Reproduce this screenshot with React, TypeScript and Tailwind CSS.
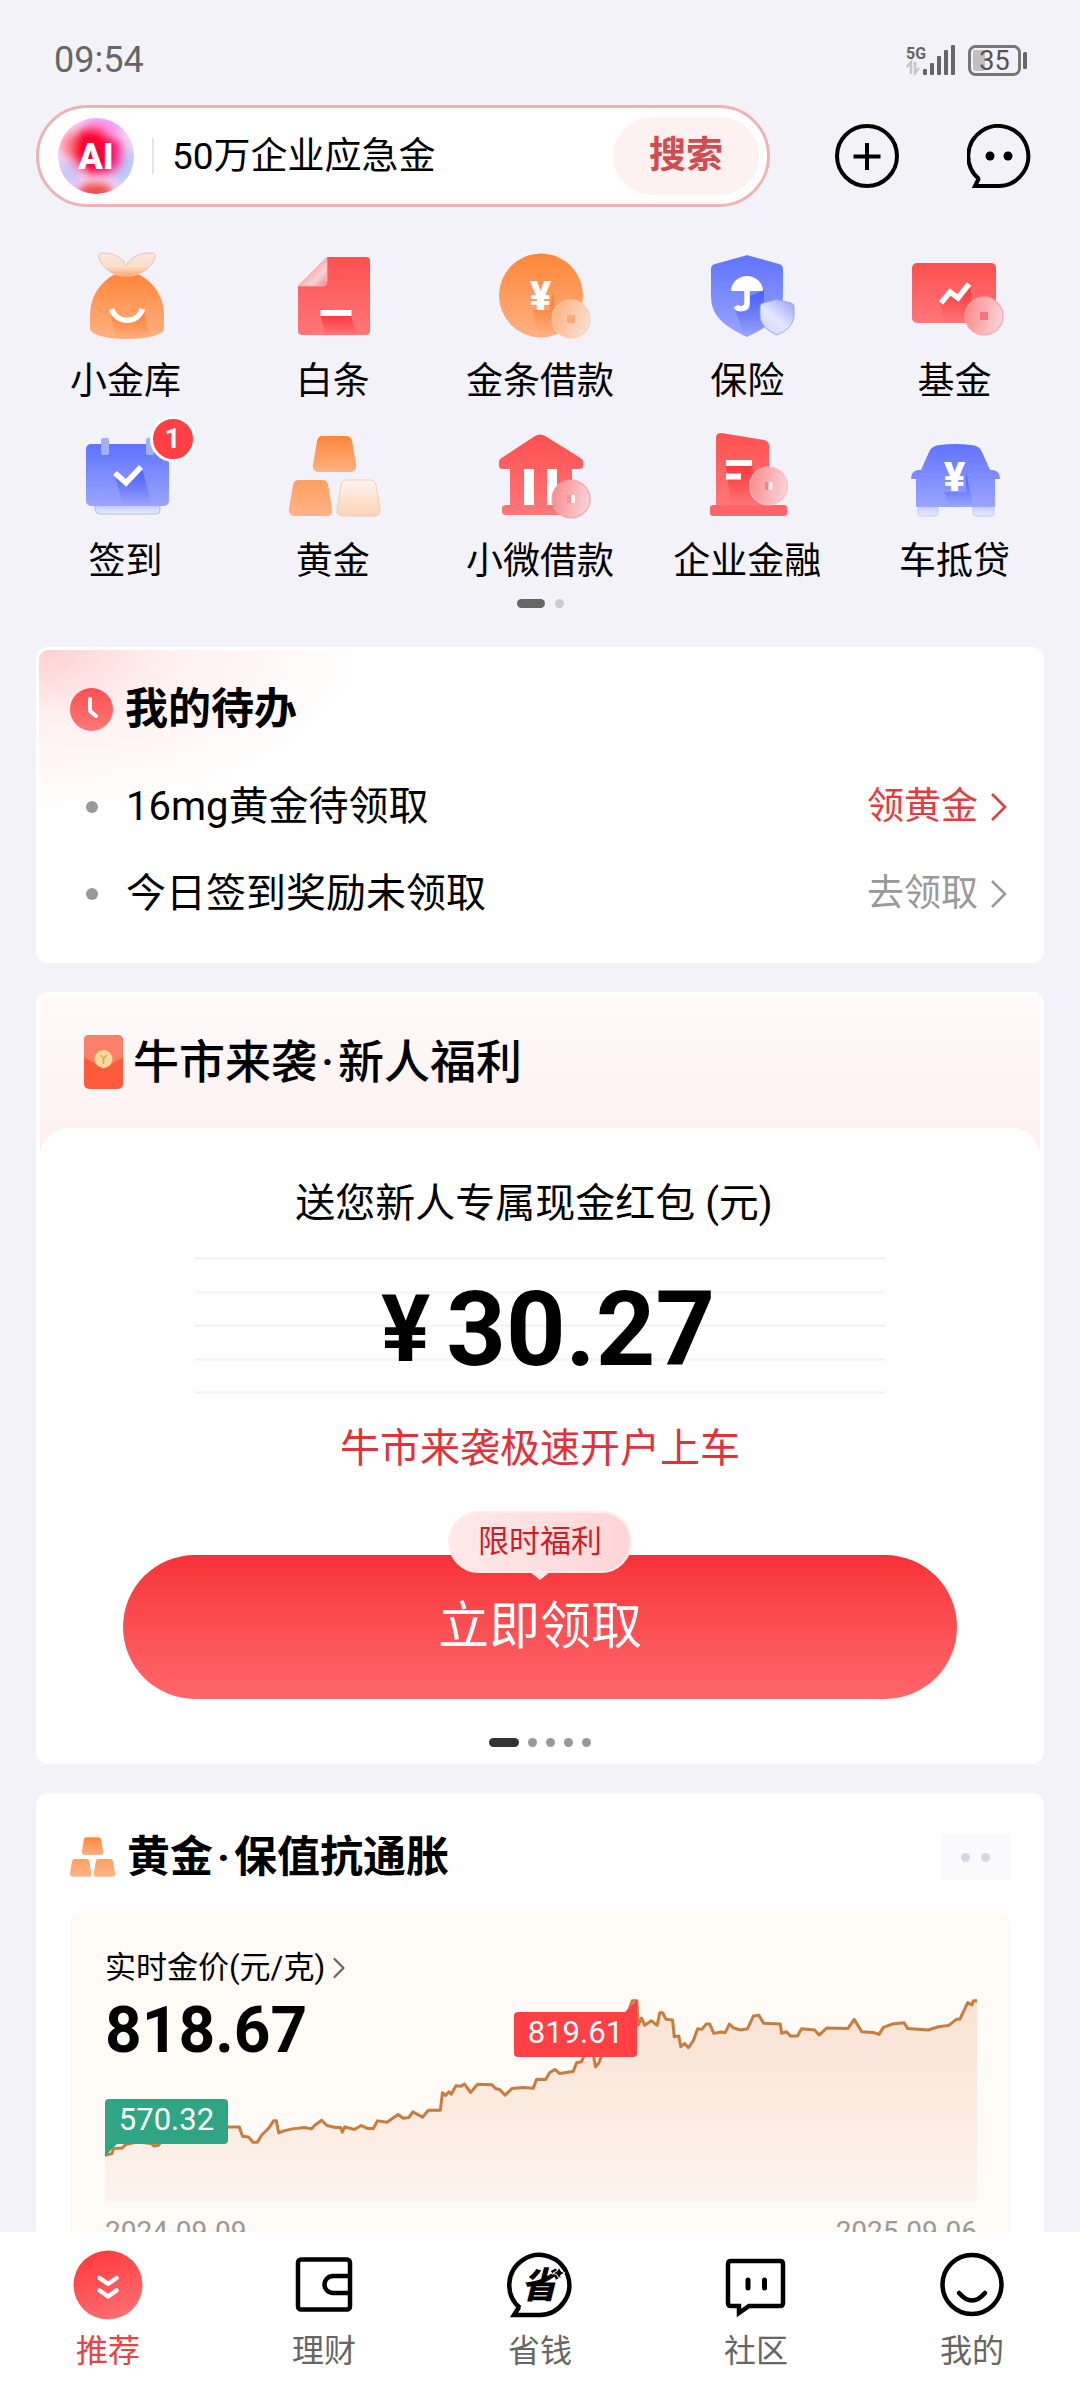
import React, { useState } from 'react';
import { ChevronRight } from 'lucide-react';

interface Service {
  name: string;
  icon: React.ReactNode;
  badge?: number;
}

interface Todo {
  text: string;
  action: string;
  highlight: boolean;
}

// Shared gradients, referenced by id from every icon below
const IconDefs: React.FC = () => (
  <svg width="0" height="0" className="absolute" aria-hidden="true">
    <defs>
      <linearGradient id="orange" x1="0" y1="0" x2="0" y2="1">
        <stop offset="0" stopColor="#ff8638" />
        <stop offset="1" stopColor="#ffb184" />
      </linearGradient>
      <linearGradient id="orangeSoft" x1="0" y1="0" x2="0" y2="1">
        <stop offset="0" stopColor="#ff9f60" />
        <stop offset="1" stopColor="#ffb388" />
      </linearGradient>
      <linearGradient id="red" x1="0" y1="0" x2="0" y2="1">
        <stop offset="0" stopColor="#ff5050" />
        <stop offset="1" stopColor="#ff777a" />
      </linearGradient>
      <linearGradient id="blue" x1="0" y1="0" x2="0" y2="1">
        <stop offset="0" stopColor="#5f74ff" />
        <stop offset="1" stopColor="#9ba4ff" />
      </linearGradient>
      <linearGradient id="tabRed" x1="0.3" y1="0" x2="0.7" y2="1">
        <stop offset="0" stopColor="#ff3a3d" />
        <stop offset="1" stopColor="#ff7073" />
      </linearGradient>
      <linearGradient id="shadeOrange" x1="0" y1="0" x2="0" y2="1">
        <stop offset="0" stopColor="#ff7320" stopOpacity="0.8" />
        <stop offset="1" stopColor="#ff7320" stopOpacity="0" />
      </linearGradient>
      <linearGradient id="shadeRed" x1="0" y1="0" x2="0" y2="1">
        <stop offset="0" stopColor="#f63034" stopOpacity="0.8" />
        <stop offset="1" stopColor="#f63034" stopOpacity="0" />
      </linearGradient>
      <linearGradient id="shadeBlue" x1="0" y1="0" x2="0" y2="1">
        <stop offset="0" stopColor="#3f55fb" stopOpacity="0.8" />
        <stop offset="1" stopColor="#3f55fb" stopOpacity="0" />
      </linearGradient>
      <linearGradient id="ear" x1="0" y1="0" x2="0" y2="1">
        <stop offset="0" stopColor="#f8e9e4" />
        <stop offset="0.6" stopColor="#fbdcc9" />
        <stop offset="1" stopColor="#ffa56c" />
      </linearGradient>
      <linearGradient id="fold" x1="0" y1="0" x2="1" y2="1">
        <stop offset="0.35" stopColor="#fb9da0" />
        <stop offset="0.7" stopColor="#f9d3d6" />
        <stop offset="1" stopColor="#fb8085" />
      </linearGradient>
      <linearGradient id="coinRed" x1="0" y1="0.4" x2="1" y2="0.6">
        <stop offset="0" stopColor="#fa8c8e" />
        <stop offset="1" stopColor="#f8d5da" />
      </linearGradient>
      <linearGradient id="coinOrange" x1="0" y1="0.3" x2="1" y2="0.7">
        <stop offset="0" stopColor="#ffb27e" />
        <stop offset="1" stopColor="#f7e0d6" />
      </linearGradient>
      <linearGradient id="miniShield" x1="0" y1="1" x2="0.8" y2="0">
        <stop offset="0" stopColor="#c9d0fb" />
        <stop offset="0.5" stopColor="#e4e8fc" />
        <stop offset="1" stopColor="#a2adfb" />
      </linearGradient>
      <linearGradient id="paleOrange" x1="0" y1="0" x2="0" y2="1">
        <stop offset="0" stopColor="#fdf3ee" />
        <stop offset="1" stopColor="#fdd3b8" />
      </linearGradient>
      <linearGradient id="paleBlue" x1="0" y1="0" x2="0" y2="1">
        <stop offset="0" stopColor="#b8c3fb" />
        <stop offset="1" stopColor="#e9edfc" />
      </linearGradient>
      <linearGradient id="area" x1="0" y1="0" x2="0" y2="1">
        <stop offset="0" stopColor="#f8e2d3" />
        <stop offset="1" stopColor="#fdf3ed" />
      </linearGradient>
    </defs>
  </svg>
);

const Icon: React.FC<{ children: React.ReactNode }> = ({ children }) => (
  <svg viewBox="0 0 96 90" className="w-24 h-[90px] overflow-visible" aria-hidden="true">{children}</svg>
);

const Coin: React.FC<{ cx: number; cy: number; fill: string; stroke: string; hole: string }> = ({ cx, cy, fill, stroke, hole }) => (
  <g>
    <circle cx={cx} cy={cy} r="19" fill={fill} stroke={stroke} strokeWidth="1.2" />
    <rect x={cx - 4} y={cy - 4} width="8" height="8" fill={hole} />
  </g>
);

const Yuan: React.FC<{ y: number }> = ({ y }) => (
  <text x="48.5" y={y} textAnchor="middle" fontSize="40" fontWeight="900" fill="#fff" fontFamily="Roboto, sans-serif">¥</text>
);

const goldBar = (x: number, y: number) =>
  `M${x + 9} ${y}h24q5 0 6 5l4 24q1 7-6 7h-31q-7 0-6-7l4-24q1-5 5-5z`;

const services: Service[] = [
  {
    name: '小金库',
    icon: (
      <Icon>
        <path d="M37 22h23c17 9 26 23 26 42v13c0 5-15 10-37 10S12 82 12 77V64c0-19 9-33 25-42z" fill="url(#orange)" />
        <path d="M32 58l6 28c10 2 26 1 34-2l-7-28c-6 16-25 20-33 2z" fill="url(#shadeOrange)" />
        <path d="M48 24C38 25 24 18 21 5c-1-3 1-4 4-4 10 0 20 4 23 13C52 5 62 1 73 1c3 0 5 1 4 4-3 13-19 20-29 19z" fill="url(#ear)" stroke="#eec0a8" strokeWidth="1" />
        <path d="M33.500 57c5 15 26 15 31 0" fill="none" stroke="#fff" strokeWidth="5.500" />
      </Icon>
    ),
  },
  {
    name: '白条',
    icon: (
      <Icon>
        <path d="M42 5h39q4 0 4 4v70q0 4-4 4H17q-4 0-4-4V34z" fill="url(#red)" />
        <path d="M36 64h30l6 19H40z" fill="url(#shadeRed)" />
        <path d="M42 5v24q0 5-5 5H13z" fill="url(#fold)" stroke="#f8b5b9" strokeWidth="0.800" />
        <rect x="35.500" y="58" width="31" height="6" fill="#fff" />
      </Icon>
    ),
  },
  {
    name: '金条借款',
    icon: (
      <Icon>
        <circle cx="49" cy="43.500" r="42" fill="url(#orange)" />
        <path d="M40 58h17l4-18 4 42H46z" fill="url(#shadeOrange)" />
        <Yuan y={58} />
        <Coin cx={79} cy={67} fill="url(#coinOrange)" stroke="#ffd0a8" hole="#fba877" />
      </Icon>
    ),
  },
  {
    name: '保险',
    icon: (
      <Icon>
        <path d="M45 4q3-1.500 6 0l29 8q4 1 4 5v27c0 22-16 31-36 41C28 75 12 66 12 44V17q0-4 4-5z" fill="url(#blue)" />
        <path d="M36 58l9 25q3 2 6 0l14-9V38L51 44v14z" fill="url(#shadeBlue)" />
        <path d="M32 39c0-8 7-15 16-15s16 7 16 15z" fill="#fff" />
        <path d="M48 38v13c0 7-9 7-11 3" fill="none" stroke="#fff" strokeWidth="5.500" />
        <path d="M77 47.500l15 3.500q3 1 3 4v8c0 10-8 16-17 20-9-4-17-10-17-20v-8q0-3 3-4z" fill="url(#miniShield)" stroke="#93a0ec" strokeWidth="0.900" />
      </Icon>
    ),
  },
  {
    name: '基金',
    icon: (
      <Icon>
        <rect x="6" y="11" width="84" height="60" rx="5" fill="url(#red)" />
        <path d="M34 50l10-8 8 6 12-14 4 36H38z" fill="url(#shadeRed)" />
        <path d="M35 51l9-11 8 6 11-14" fill="none" stroke="#fff" strokeWidth="5.500" />
        <Coin cx={78} cy={64} fill="url(#coinRed)" stroke="#f9a5a9" hole="#f4747a" />
      </Icon>
    ),
  },
  {
    name: '签到',
    badge: 1,
    icon: (
      <Icon>
        <path d="M17 72h65v6q0 4-4 4H22q-4 0-5-4z" fill="url(#paleBlue)" stroke="#a3b2f0" strokeWidth="0.800" />
        <rect x="8" y="12" width="83" height="62" rx="5" fill="url(#blue)" />
        <rect x="23" y="6" width="8" height="17" rx="2" fill="#a5b0fb" />
        <rect x="68" y="6" width="8" height="17" rx="2" fill="#a5b0fb" />
        <path d="M37 44l11 10 16-18 10 37H45z" fill="url(#shadeBlue)" />
        <path d="M37 41l11 10 15-16" fill="none" stroke="#fff" strokeWidth="5.500" />
      </Icon>
    ),
  },
  {
    name: '黄金',
    icon: (
      <Icon>
        <path d={goldBar(28, 4)} fill="url(#orange)" />
        <path d={goldBar(4, 48)} fill="url(#orangeSoft)" />
        <path d={goldBar(52, 48)} fill="url(#paleOrange)" stroke="#f5c4a5" strokeWidth="0.800" />
      </Icon>
    ),
  },
  {
    name: '小微借款',
    icon: (
      <Icon>
        <path
          fillRule="evenodd"
          d="M43 4q5-3 10 0l34 21q4 2 4 5v4q0 3-4 3h-7v36h3q3 0 3 3v4q0 3-3 3H14q-4 0-4-3v-4q0-3 4-3h4V37h-7q-4 0-4-3v-4q0-3 4-5zM32 37v36h10V37zM55 37v36h10V37z"
          fill="url(#red)"
        />
        <path d="M32 37h10v36H32zM55 37h10v36H55z" fill="#fff" />
        <Coin cx={79} cy={67} fill="url(#coinRed)" stroke="#f4a3a8" hole="#f6949a" />
        <rect x="79" y="63" width="4" height="8" fill="#fff" />
      </Icon>
    ),
  },
  {
    name: '企业金融',
    icon: (
      <Icon>
        <path d="M17 6q0-5 5-5l43 7q5 1 5 6v59H17z" fill="url(#red)" />
        <path d="M27 34h26l6 39H32z" fill="url(#shadeRed)" />
        <rect x="11" y="73" width="77" height="11" rx="3" fill="#ff6468" />
        <path d="M27 28h26v6H27zM27 41.500h15v6H27z" fill="#fff" />
        <Coin cx={69.5} cy={54} fill="url(#coinRed)" stroke="#fbbcbf" hole="#fdf0f1" />
        <rect x="65.500" y="50" width="4" height="8" fill="#f78186" />
      </Icon>
    ),
  },
  {
    name: '车抵贷',
    icon: (
      <Icon>
        <path d="M12 72h20v9q0 3-3 3H16q-4 0-4-3zM67 72h21v9q0 3-3 3H71q-4 0-4-3z" fill="url(#paleBlue)" stroke="#b4c0f2" strokeWidth="0.800" />
        <path d="M34 13q15-2 31 0 9 1 11 7l8 18h3q7 1 7 9h-5v28H10V47H5q0-8 7-9h3l8-18q2-6 11-7z" fill="url(#blue)" />
        <path d="M38 60h22V40l7 34H43z" fill="url(#shadeBlue)" />
        <Yuan y={59} />
      </Icon>
    ),
  },
];

const todos: Todo[] = [
  { text: '16mg黄金待领取', action: '领黄金', highlight: true },
  { text: '今日签到奖励未领取', action: '去领取', highlight: false },
];

// Gold price curve, one year
const pricePoints: number[][] = [
  [305, 1125], [325, 1120], [330, 1105], [355, 1103], [365, 1093], [400, 1085], [440, 1090], [447, 1097], [460, 1095], [475, 1080],
  [560, 1060], [640, 1030], [662, 1040], [695, 1040], [705, 1068], [722, 1070], [735, 1086], [748, 1086], [760, 1065], [780, 1045],
  [795, 1022], [803, 1022], [810, 1058], [825, 1052], [850, 1046], [885, 1042], [905, 1046], [915, 1035], [935, 1020], [950, 1036],
  [975, 1042], [990, 1042], [995, 1056], [1002, 1040], [1030, 1048], [1050, 1036], [1070, 1045], [1085, 1045], [1097, 1022], [1125, 1026],
  [1157, 1003], [1172, 1014], [1188, 1012], [1200, 995], [1228, 1011], [1245, 990], [1280, 990], [1286, 938], [1295, 946], [1305, 935],
  [1312, 942], [1325, 917], [1340, 918], [1350, 912], [1368, 937], [1388, 912], [1430, 914], [1440, 925], [1452, 928], [1468, 945],
  [1488, 925], [1520, 922], [1550, 924], [1560, 897], [1586, 898], [1598, 877], [1613, 868], [1626, 880], [1666, 874], [1676, 848],
  [1690, 845], [1703, 815], [1723, 815], [1731, 860], [1740, 850], [1753, 815], [1778, 760], [1818, 720], [1838, 662], [1851, 662],
  [1855, 735], [1865, 714], [1874, 736], [1893, 722], [1910, 736], [1918, 698], [1926, 698], [1936, 718], [1955, 720], [1960, 770],
  [1973, 768], [1979, 800], [1990, 790], [2001, 803], [2016, 780], [2028, 746], [2040, 748], [2053, 732], [2063, 732], [2075, 760],
  [2096, 756], [2108, 758], [2120, 732], [2133, 744], [2153, 750], [2173, 746], [2190, 708], [2206, 706], [2220, 730], [2268, 732],
  [2272, 760], [2286, 755], [2298, 768], [2318, 768], [2330, 746], [2368, 750], [2381, 765], [2403, 744], [2465, 745], [2483, 718],
  [2505, 755], [2538, 757], [2555, 763], [2568, 742], [2593, 732], [2628, 728], [2638, 745], [2698, 750], [2728, 740], [2758, 736],
  [2780, 718], [2790, 718], [2813, 668], [2825, 675], [2830, 662], [2840, 662],
];
const pricePath = 'M' + pricePoints.map(p => p.join(' ')).join('L');

const StatusBar: React.FC = () => (
  <div className="flex items-center justify-between h-14 pl-[54px] pr-[52px] text-[#666]">
    <span className="text-4xl leading-10">09:54</span>
    <svg width="122" height="34" viewBox="0 0 122 34" className="overflow-visible" fill="#666" fontFamily="Roboto, sans-serif" aria-hidden="true">
      <text x="0" y="16" fontSize="16" fontWeight="700">5G</text>
      <path d="M1 24l4-5v12M9 19v11l4-5" fill="none" stroke="#c6c6ca" strokeWidth="2.500" />
      <rect x="17" y="26" width="4" height="6" rx="1" />
      <rect x="24" y="20" width="4" height="12" rx="1" />
      <rect x="31" y="13" width="4" height="19" rx="1" />
      <rect x="38" y="7" width="4" height="25" rx="1" />
      <rect x="45" y="2" width="4" height="30" rx="1" />
      <rect x="63.500" y="3.500" width="50" height="28" rx="6" fill="none" stroke="#777" strokeWidth="3" />
      <rect x="67" y="7" width="12" height="21" rx="2" fill="#c0c0c4" />
      <rect x="117" y="9" width="4" height="17" rx="1.500" />
      <text x="88.500" y="27" textAnchor="middle" fontSize="27" fill="#555">35</text>
    </svg>
  </div>
);

const AiLogo: React.FC = () => (
  <svg viewBox="0 0 78 78" className="w-[78px] h-[78px] shrink-0" role="img" aria-label="AI">
    <defs>
      <clipPath id="aiClip"><circle cx="39" cy="39" r="38" /></clipPath>
      <filter id="aiBlur" x="-50%" y="-50%" width="200%" height="200%"><feGaussianBlur stdDeviation="5" /></filter>
    </defs>
    <g clipPath="url(#aiClip)">
      <rect width="78" height="78" fill="#f3d3f3" />
      <g filter="url(#aiBlur)">
        <ellipse cx="48" cy="8" rx="20" ry="10" fill="#f69cf2" />
        <ellipse cx="68" cy="50" rx="14" ry="18" fill="#b3cdff" />
        <ellipse cx="12" cy="56" rx="12" ry="12" fill="#cfc4f5" />
        <ellipse cx="14" cy="28" rx="10" ry="12" fill="#ff8a94" />
        <ellipse cx="51" cy="38" rx="16" ry="20" fill="#f4209a" />
        <ellipse cx="35" cy="33" rx="21" ry="24" fill="#ff0038" />
        <ellipse cx="38" cy="74" rx="18" ry="7" fill="#f2392f" />
      </g>
    </g>
    <text x="39" y="52" textAnchor="middle" fontSize="36" fontWeight="900" fill="#fff" fontFamily="Roboto, sans-serif">AI</text>
  </svg>
);

const SearchRow: React.FC = () => (
  <div className="flex items-center pl-9 pr-[49px] mt-[17px]">
    <form
      className="flex-1 min-w-0 flex items-center h-[102px] pl-[18px] pr-2 bg-white border-3 border-[#efb3b6] rounded-full"
      onSubmit={e => e.preventDefault()}
    >
      <AiLogo />
      <span className="w-0.5 h-9 ml-[17px] mr-[18px] bg-[#e4e4e8]" />
      <input
        type="search"
        aria-label="搜索"
        placeholder="50万企业应急金"
        className="flex-1 min-w-0 h-14 text-[37px] text-black placeholder:text-black outline-none"
      />
      <button type="submit" className="shrink-0 w-[146px] h-[78px] rounded-full bg-[#fdf1f2] text-[#d14c50] text-[37px] font-bold">搜索</button>
    </form>
    <button aria-label="添加" className="shrink-0 ml-[65px]">
      <svg width="64" height="64" viewBox="0 0 64 64" fill="none" stroke="#000" strokeWidth="4">
        <circle cx="32" cy="32" r="30" />
        <path d="M32 19v27M18.500 32.500h27" />
      </svg>
    </button>
    <button aria-label="消息" className="shrink-0 ml-[68px]">
      <svg width="64" height="64" viewBox="0 0 64 64" fill="none" stroke="#000" strokeWidth="4">
        <path d="M12 55A30 30 0 1 1 32 62H8l4-8" />
        <circle cx="23" cy="32" r="4.500" fill="#000" stroke="none" />
        <circle cx="41" cy="32" r="4.500" fill="#000" stroke="none" />
      </svg>
    </button>
  </div>
);

const ServiceGrid: React.FC = () => (
  <>
    <div className="grid grid-cols-5 gap-y-[30px] px-[22px] mt-[45px]">
      {services.map(s => (
        <a key={s.name} href="#" className="flex flex-col items-center">
          <span className="relative">
            {s.icon}
            {s.badge && (
              <span className="absolute -top-4 -right-[22px] w-[46px] h-[46px] flex items-center justify-center rounded-full bg-[#ff4045] border-3 border-white text-white text-[28px] leading-none font-bold">
                {s.badge}
              </span>
            )}
          </span>
          <span className="mt-5 text-[37px] leading-10 whitespace-nowrap text-black">{s.name}</span>
        </a>
      ))}
    </div>
    <div className="flex justify-center gap-[10px] mt-[17px]">
      <span className="w-7 h-[9px] rounded-full bg-[#666]" />
      <span className="w-[9px] h-[9px] rounded-full bg-[#ccccd0]" />
    </div>
  </>
);

const TodoCard: React.FC = () => (
  <section className="mx-9 mt-[39px] border-3 border-white rounded-xl bg-white bg-[radial-gradient(ellipse_330px_170px_at_top_left,#ffd0d1_0%,#fff0f0_40%,#ffffff_100%)] px-[31px] pt-[29px] pb-[23px]">
    <h2 className="flex items-center gap-3 text-[43px] leading-[60px] font-bold">
      <svg width="43" height="43" viewBox="0 0 43 43" aria-hidden="true">
        <circle cx="21.500" cy="21.500" r="21.500" fill="url(#red)" />
        <path d="M20 11v12l6 5" fill="none" stroke="#fff" strokeWidth="4" strokeLinecap="round" strokeLinejoin="round" />
      </svg>
      我的待办
    </h2>
    <ul className="mt-6">
      {todos.map(t => (
        <li key={t.text} className="flex items-center h-[87px]">
          <span className="w-3 h-3 mx-4 rounded-full bg-[#999] shrink-0" />
          <span className="flex-1 ml-3 text-[40px] leading-[56px]">{t.text}</span>
          <a href="#" className={`flex items-center text-[37px] leading-[56px] ${t.highlight ? 'text-[#e43b40]' : 'text-[#999]'}`}>
            {t.action}
            <svg width="32" height="32" viewBox="0 0 32 32" fill="none" stroke="currentColor" strokeWidth="2.500" aria-hidden="true">
              <path d="M14 3l13 13-13 13" />
            </svg>
          </a>
        </li>
      ))}
    </ul>
  </section>
);

const BonusCard: React.FC = () => (
  <section className="mx-9 mt-[29px] p-1 rounded-xl bg-white">
    <div className="bg-[linear-gradient(#fffafa,#feefef_160px)]">
      <h2 className="flex items-center h-[132px] pl-11 text-[46px] font-medium">
        <svg width="39" height="54" viewBox="0 0 39 54" className="mr-[10px]" aria-hidden="true">
          <rect width="39" height="54" rx="5" fill="#ff5a3c" />
          <path d="M0 22V5q0-5 5-5h29q5 0 5 5v17L19.500 34z" fill="#fb8069" />
          <circle cx="19.500" cy="24" r="9" fill="#f8da9c" />
          <path d="M17 20l2.500 4 3-4M19.500 24v5" stroke="#d9a95c" strokeWidth="1.500" fill="none" />
        </svg>
        牛市来袭<span className="mx-1">·</span>新人福利
      </h2>
      <div className="flex flex-col rounded-t-[28px] bg-white pt-12 pb-[13px] text-center">
        <p className="pr-3 text-[40px] leading-[56px]">送您新人专属现金红包 (元)</p>
        <div className="grid mx-[155px] mt-[25px]">
          <div className="[grid-area:1/1] flex flex-col justify-between h-[137px]">
            {[0, 1, 2, 3, 4].map(i => <span key={i} className="h-[3px] bg-[#f5f5f5]" />)}
          </div>
          <p className="[grid-area:1/1] flex items-center justify-center gap-4 pl-4 text-[104px] leading-[146px] font-bold">
            <span className="text-[92px]">¥</span>30.27
          </p>
        </div>
        <p className="mt-[18px] text-[40px] leading-[56px] text-[#e1323a]">牛市来袭极速开户上车</p>
        <div className="relative mx-[83px] mt-[78px]">
          <button className="w-full h-36 rounded-full bg-linear-to-b from-[#f73137] to-[#ff666b] text-white text-[51px]">立即领取</button>
          <span className="absolute left-1/2 -translate-x-1/2 -top-11 h-[62px] px-7 flex items-center rounded-full border-2 border-[#ffeceb] bg-linear-to-r from-[#ffe9e8] to-[#ffd5d7] text-[31px] text-[#cb1f2b] whitespace-nowrap">
            限时福利
            <span className="absolute left-1/2 -translate-x-1/2 -bottom-[9px] w-5 h-2 bg-[#ffe9e8] [clip-path:polygon(0_0,100%_0,50%_100%)]" />
          </span>
        </div>
        <div className="flex justify-center gap-[9px] mt-[39px]">
          <span className="w-[30px] h-[9px] rounded-full bg-[#333]" />
          {[1, 2, 3, 4].map(i => <span key={i} className="w-[9px] h-[9px] rounded-full bg-[#999]" />)}
        </div>
      </div>
    </div>
  </section>
);

const GoldCard: React.FC = () => (
  <section className="mx-9 mt-[29px] px-[34px] pt-[34px] pb-9 rounded-xl bg-white">
    <div className="flex items-center justify-between">
      <h2 className="flex items-center text-[43px] leading-[60px] font-bold">
        <svg width="45" height="40" viewBox="4 4 91 80" className="mr-3" aria-hidden="true">
          <path d={goldBar(28, 4)} fill="url(#orange)" />
          <path d={goldBar(4, 48)} fill="url(#orangeSoft)" />
          <path d={goldBar(52, 48)} fill="url(#orangeSoft)" />
        </svg>
        黄金<span className="mx-1">·</span>保值抗通胀
      </h2>
      <button aria-label="更多" className="flex items-center justify-center gap-[11px] w-[69px] h-[46px] bg-[#fafafc]">
        <span className="w-[9px] h-[9px] rounded-full bg-[#d6d6de]" />
        <span className="w-[9px] h-[9px] rounded-full bg-[#d6d6de]" />
      </button>
    </div>
    <div className="mt-[25px] pt-9 pb-9 pl-[35px] pr-[33px] rounded-xl bg-[#fefaf6]">
      <a href="#" className="flex items-center text-[31px] leading-10">
        实时金价(元/克)
        <ChevronRight className="w-9 h-9 -ml-1 text-[#666]" strokeWidth={1.5} />
      </a>
      <div className="relative grid mt-3">
        <svg viewBox="305 660 2535 602" preserveAspectRatio="none" className="[grid-area:1/1] w-full h-[201px] overflow-visible" aria-hidden="true">
          <path d={`${pricePath}V1262H305Z`} fill="url(#area)" />
          <path d={pricePath} fill="none" stroke="#c67d3e" strokeWidth="3" strokeLinejoin="round" vectorEffect="non-scaling-stroke" />
        </svg>
        <strong className="[grid-area:1/1] text-[64px] leading-[62px] font-bold">818.67</strong>
        <span className="absolute left-0 top-[99px] w-[123px] h-[45px] rounded rounded-bl-none bg-[#2fa583] text-center text-white text-[31px] leading-[42px]">
          570.32
          <span className="absolute left-0 top-full w-3 h-3 bg-[#2fa583] [clip-path:polygon(0_0,100%_0,0_100%)]" />
        </span>
        <span className="absolute right-[39%] top-3 w-[123px] h-[45px] rounded rounded-tr-none bg-[#ff4045] text-center text-white text-[31px] leading-[42px]">
          819.61
          <span className="absolute right-0 bottom-full w-3 h-3 bg-[#ff4045] [clip-path:polygon(100%_0,100%_100%,0_100%)]" />
        </span>
      </div>
      <div className="flex justify-between mt-[15px] text-[28px] leading-8 text-[#999]">
        <span>2024-09-09</span>
        <span>2025-09-06</span>
      </div>
    </div>
  </section>
);

const tabs: { name: string; icon: React.ReactNode }[] = [
  {
    name: '推荐',
    icon: (
      <>
        <circle cx="35" cy="35" r="34.500" fill="url(#tabRed)" stroke="none" />
        <path d="M26.500 28l8.500 6 8.500-6M26.500 40.500l8.500 6 8.500-6" stroke="#fff" strokeLinecap="round" strokeLinejoin="round" />
      </>
    ),
  },
  {
    name: '理财',
    icon: (
      <>
        <rect x="9" y="9.500" width="52" height="50" rx="3" />
        <path d="M61 26H44a8.500 8.500 0 0 0 0 17h17" />
      </>
    ),
  },
  {
    name: '省钱',
    icon: (
      <>
        <path d="M15 58A30 30 0 1 1 35 65H9l5-8" />
        <text x="34" y="48" textAnchor="middle" fontSize="36" fontWeight="900" fontStyle="italic" fill="#000" stroke="none" fontFamily="'Noto Sans CJK SC', sans-serif">省</text>
        <path d="M54 17q1 5 6 6-5 1-6 6-1-5-6-6 5-1 6-6z" fill="#000" stroke="#fff" strokeWidth="1" />
      </>
    ),
  },
  {
    name: '社区',
    icon: (
      <>
        <path d="M10 11h49q3 0 3 3v39q0 3-3 3H28l-10 7v-7h-8q-3 0-3-3V14q0-3 3-3z" />
        <path d="M27 30v8M43.500 30v8" strokeWidth="5" strokeLinecap="round" />
      </>
    ),
  },
  {
    name: '我的',
    icon: (
      <>
        <circle cx="35" cy="34.500" r="29.500" />
        <path d="M22 43q13 15 26 0" strokeLinecap="round" />
      </>
    ),
  },
];

const App: React.FC = () => {
  const [activeTab, setActiveTab] = useState('推荐');

  return (
    <div className="h-screen flex flex-col bg-[#f3f2f8] text-black font-[Roboto,'Noto_Sans_CJK_SC',sans-serif]">
      <IconDefs />
      <main className="flex-1 min-h-0 overflow-y-auto [scrollbar-width:none] pt-8">
        <StatusBar />
        <SearchRow />
        <ServiceGrid />
        <TodoCard />
        <BonusCard />
        <GoldCard />
      </main>

      {/* Bottom tabs */}
      <nav className="grid grid-cols-5 pt-[18px] pb-[17px] bg-white">
        {tabs.map(t => (
          <button key={t.name} onClick={() => setActiveTab(t.name)} className="flex flex-col items-center">
            <svg width="70" height="70" viewBox="0 0 70 70" fill="none" stroke="#000" strokeWidth="4.500" aria-hidden="true">{t.icon}</svg>
            <span className={`mt-[11px] text-[32px] leading-10 ${activeTab === t.name ? 'text-[#ec4046]' : 'text-[#666]'}`}>{t.name}</span>
          </button>
        ))}
      </nav>
    </div>
  );
};

export default App;
